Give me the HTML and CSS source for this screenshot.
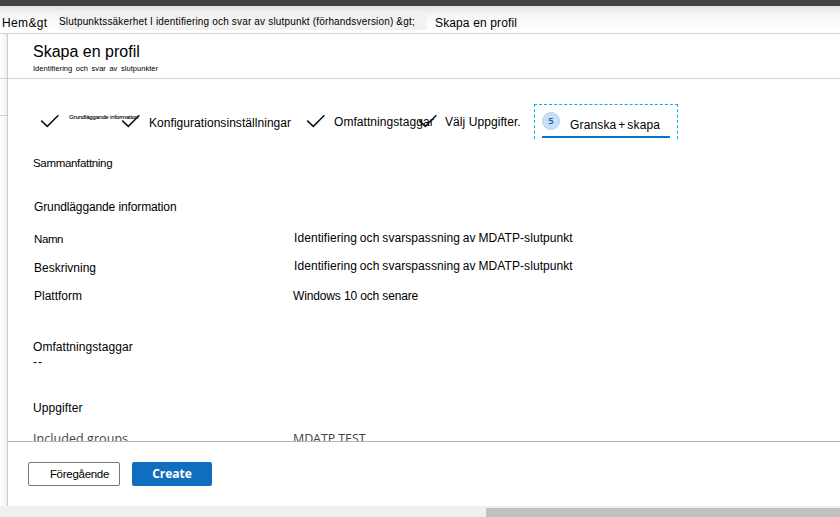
FILE: index.html
```html
<!DOCTYPE html>
<html lang="sv">
<head>
<meta charset="utf-8">
<title>Skapa en profil</title>
<link rel="stylesheet" href="styles.css">
</head>
<body>
<div class="topbar"></div>
<nav class="crumbs">
  <span class="crumb home">Hem&amp;gt</span>
  <span class="crumb parent">Slutpunktssäkerhet I identifiering och svar av slutpunkt (förhandsversion) &amp;gt;</span>
  <span class="crumb current">Skapa en profil</span>
</nav>
<div class="workspace">
  <aside class="gutter"><i></i><i></i></aside>
  <main class="blade">
    <header class="head">
      <h1>Skapa en profil</h1>
      <p>Identifiering och svar av slutpunkter</p>
    </header>
    <section class="content">
      <div class="steps">
        <div class="step s1"><svg class="check" viewBox="0 0 20 14"><path d="M1.2 6.6 7.3 12.4 18.4 1.2"/></svg><span>Grundläggande information</span></div>
        <div class="step s2"><svg class="check" viewBox="0 0 20 14"><path d="M1.2 6.6 7.3 12.4 18.4 1.2"/></svg><span>Konfigurationsinställningar</span></div>
        <div class="step s3"><svg class="check" viewBox="0 0 20 14"><path d="M1.2 6.6 7.3 12.4 18.4 1.2"/></svg><span>Omfattningstaggar</span></div>
        <div class="step s4"><svg class="check" viewBox="0 0 20 14"><path d="M1.2 6.6 7.3 12.4 18.4 1.2"/></svg><span>Välj Uppgifter.</span></div>
        <div class="step s5"><div class="tab"><b>5</b><span>Granska + skapa</span></div></div>
      </div>
      <h2 class="summary">Sammanfattning</h2>
      <h2 class="basics">Grundläggande information</h2>
      <dl class="facts">
        <dt class="name">Namn</dt><dd class="long up">Identifiering och svarspassning av MDATP-slutpunkt</dd>
        <dt class="desc">Beskrivning</dt><dd class="long up2">Identifiering och svarspassning av MDATP-slutpunkt</dd>
        <dt class="plat">Plattform</dt><dd class="win">Windows 10 och senare</dd>
      </dl>
      <h2 class="tags">Omfattningstaggar</h2>
      <p class="none">--</p>
      <h2 class="assign">Uppgifter</h2>
      <div class="groups"><span>Included groups</span><span class="test">MDATP TEST</span></div>
    </section>
    <footer class="foot">
      <button class="prev">Föregående</button>
      <button class="create">Create</button>
    </footer>
  </main>
</div>
<div class="scroll"><div class="thumb"></div></div>
</body>
</html>
```
FILE: styles.css
```css
* { box-sizing: border-box; margin: 0; padding: 0; }
body {
  width: 840px; height: 517px; overflow: hidden;
  display: flex; flex-direction: column;
  background: #fff; color: #000;
  font: 12px/16px "Liberation Sans", Arial, sans-serif;
  white-space: nowrap;
}
h1, h2 { font-weight: 400; }
h2 { font-size: 12px; line-height: 16px; }
.topbar { height: 6px; background: #444240; flex: none; }
.crumbs {
  height: 28px; flex: none; display: flex; align-items: flex-start;
  background: linear-gradient(#e2e2e2, #f5f5f5 30%, #fff 90%);
  border-bottom: 1px solid #d2d2d2;
}
.home { margin: 9px 0 0 2px; width: 48px; letter-spacing: .35px; }
.parent {
  margin-top: 7px; margin-left: 9px; width: 368px; height: 17px; line-height: 18px;
  font-size: 10px; background: #f2f2f2; letter-spacing: .17px;
}
.current { margin: 9px 0 0 8px; letter-spacing: .13px; }
.workspace { height: 472px; flex: none; display: flex; }
.gutter { width: 8px; border-right: 1px solid #ccc; background: linear-gradient(90deg, #fff 20%, #f0f0f0); }
.gutter i { display: block; height: 45px; border-bottom: 1px solid #d2d2d2; }
.gutter i + i { height: 37px; }
.blade { flex: 1; display: flex; flex-direction: column; }
.head { height: 45px; flex: none; padding: 8px 0 0 25px; border-bottom: 1px solid #d2d2d2; }
.head h1 { font-size: 16px; line-height: 20px; }
.head p { font-size: 7.5px; line-height: 10px; margin-top: 2px; letter-spacing: .04px; word-spacing: 1.4px; }
.content { height: 362px; flex: none; overflow: hidden; padding-left: 25px; }
.steps { height: 76px; display: flex; padding-top: 25px; }
.step { display: flex; flex: none; height: 36px; }
.check { width: 20px; height: 14px; margin-top: 10px; flex: none; fill: none; stroke: #111; stroke-width: 1.5; }
.s1 { width: 81px; padding-left: 7px; }
.s1 span { font-size: 6px; line-height: 8px; margin: 9px 0 0 9px; letter-spacing: -.14px; -webkit-text-stroke: .1px #000; }
.s2 { width: 185px; padding-left: 7px; }
.s2 span { margin: 11px 0 0 8px; letter-spacing: .05px; }
.s3 { width: 113px; padding-left: 7px; }
.s3 span { margin: 10px 0 0 8px; letter-spacing: .06px; }
.s4 { width: 122px; padding-left: 6px; }
.s4 span { margin: 10px 0 0 7px; letter-spacing: .07px; }
.s5 { width: 144px; height: 35px; padding: 0 7px; border: 1px dashed #00b4ea; border-bottom: 0; }
.tab { flex: 1; height: 33px; display: flex; border-bottom: 2px solid #0a73cc; }
.tab b {
  width: 18px; height: 18px; margin-top: 7px; border-radius: 50%;
  background: #c7e0f4; border: 1px solid #b4d2fa; color: #17629e;
  font: 600 9.5px/16px "Noto Sans", sans-serif; text-align: center;
}
.tab span { margin: 12px 0 0 10px; letter-spacing: .15px; word-spacing: -1.6px; }
.summary { font-size: 11.5px; letter-spacing: -.32px; }
.basics { margin: 28px 0 0 1px; letter-spacing: -.12px; }
.facts { display: grid; grid-template-columns: 260px 1fr; grid-template-rows: 29px 28px 16px; margin: 16px 0 0 1px; }
.name { font-size: 11.5px; letter-spacing: -.4px; }
.long { letter-spacing: .07px; word-spacing: -.5px; }
.up { margin-top: -1px; }
.up2 { margin-top: -2px; }
.win { margin-left: -1px; letter-spacing: -.14px; }
.tags { margin-top: 35px; letter-spacing: .06px; }
.none { margin-top: -1px; letter-spacing: 1px; }
.assign { margin-top: 30px; letter-spacing: .1px; }
.groups { display: flex; margin-top: 15px; color: #444; font-family: "Open Sans", sans-serif; font-size: 12.5px; letter-spacing: .06px; }
.groups span { width: 260px; }
.groups .test { letter-spacing: -.1px; }
.foot { flex: 1; display: flex; gap: 12px; padding: 20px 0 0 20px; border-top: 1px solid #b5b5b5; }
.foot button { height: 24px; border-radius: 2px; }
.prev { width: 92px; padding-left: 11px; border: 1px solid #777; background: #fff; color: #000; font: 11.5px/16px "Liberation Sans", sans-serif; letter-spacing: -.28px; }
.create { width: 80px; border: 0; background: #106ebe; color: #fff; font: 700 12px/16px "Open Sans", sans-serif; }
.scroll { height: 11px; flex: none; background: #f0f0f0; padding: 2px 0 0 486px; }
.thumb { height: 9px; background: #c0c0c0; }
```
